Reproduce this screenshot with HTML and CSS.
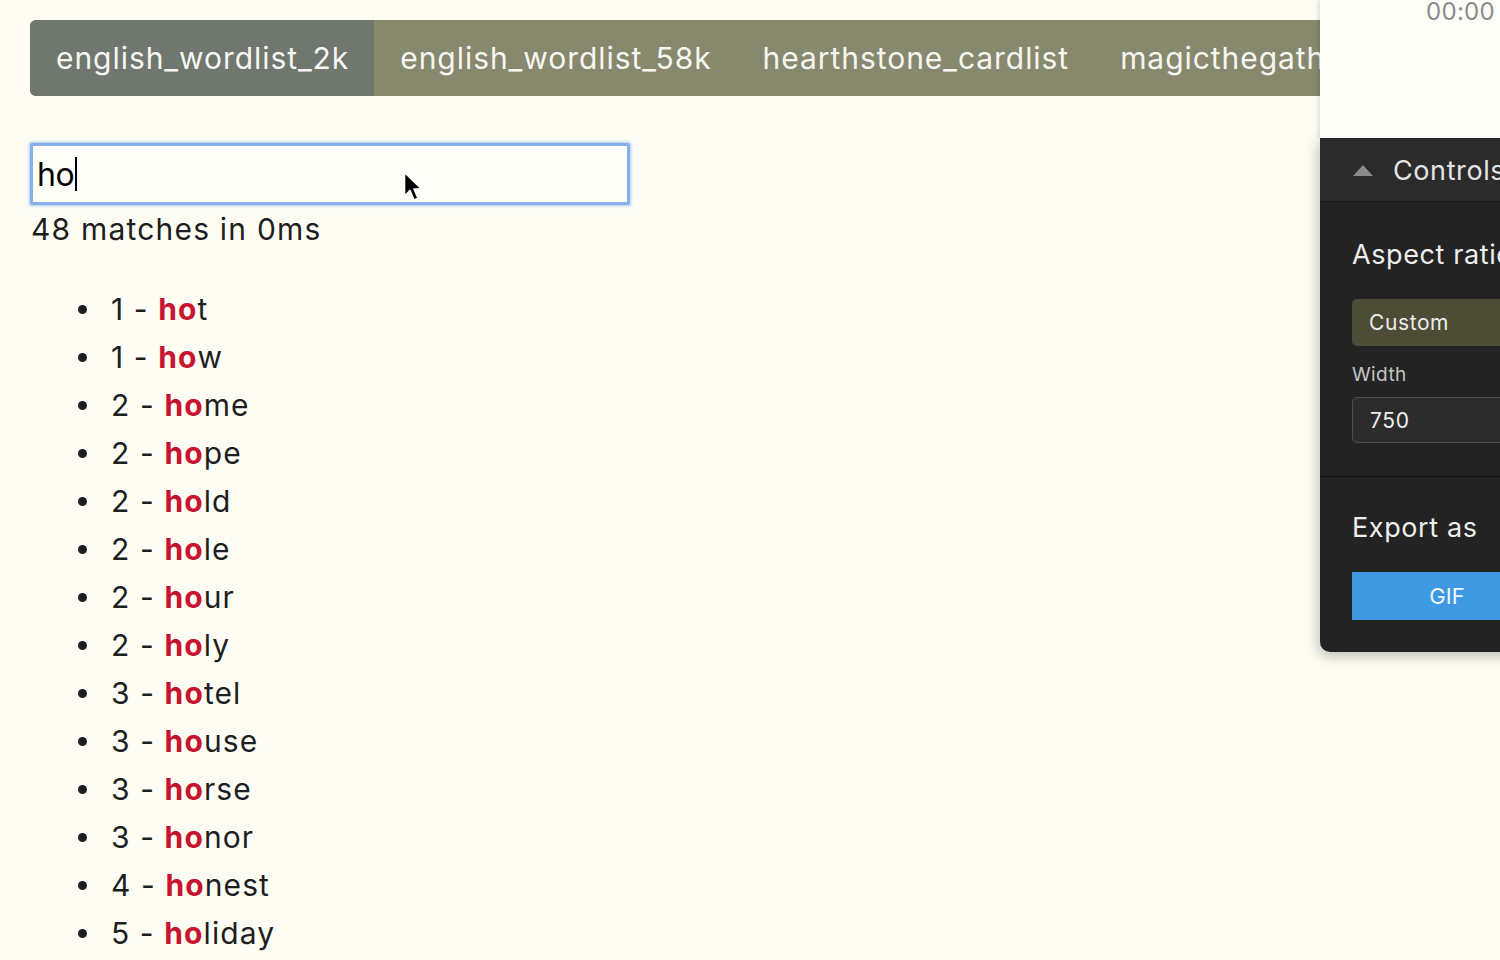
FILE: index.html
```html
<!DOCTYPE html>
<html>
<head>
<meta charset="utf-8">
<link rel="stylesheet" href="styles.css">
</head>
<body>
<main class="page">
  <nav class="tabs">
    <div class="tab active">english_wordlist_2k</div>
    <div class="tab">english_wordlist_58k</div>
    <div class="tab">hearthstone_cardlist</div>
    <div class="tab">magicthegathering_cardlist</div>
  </nav>
  <div class="search">
    <div class="search-input">ho<span class="caret"></span></div>
    <svg class="pointer" width="22" height="34" viewBox="0 0 22 34"><path d="M1.5 1.5 L1.5 25 L7 19.5 L11 29 L15 27.3 L11 18 L18.5 18 Z" fill="#000" stroke="#fff" stroke-width="1.6" stroke-linejoin="round"/></svg>
  </div>
  <div class="stats">48 matches in 0ms</div>
  <ul class="results">
    <li>1 - <b>ho</b>t</li>
    <li>1 - <b>ho</b>w</li>
    <li>2 - <b>ho</b>me</li>
    <li>2 - <b>ho</b>pe</li>
    <li>2 - <b>ho</b>ld</li>
    <li>2 - <b>ho</b>le</li>
    <li>2 - <b>ho</b>ur</li>
    <li>2 - <b>ho</b>ly</li>
    <li>3 - <b>ho</b>tel</li>
    <li>3 - <b>ho</b>use</li>
    <li>3 - <b>ho</b>rse</li>
    <li>3 - <b>ho</b>nor</li>
    <li>4 - <b>ho</b>nest</li>
    <li>5 - <b>ho</b>liday</li>
  </ul>
</main>
<aside class="panel">
  <div class="panel-top"><span class="timer">00:00</span></div>
  <div class="panel-dark">
    <div class="panel-head"><span class="tri"></span><span>Controls</span></div>
    <div class="panel-body">
      <div class="section">
        <div class="section-title">Aspect ratio</div>
        <div class="select">Custom</div>
        <div class="label">Width</div>
        <div class="field">750</div>
      </div>
      <div class="section export">
        <div class="section-title">Export as</div>
        <div class="button">GIF</div>
      </div>
    </div>
  </div>
</aside>
</body>
</html>
```
FILE: styles.css
```css
html, body {
  margin: 0;
  height: 100%;
  overflow: hidden;
}
body {
  background: #fdfdf3;
  font-family: Inter, "Noto Sans", sans-serif;
  color: #1e1e22;
}
.page {
  padding: 20px 0 0 30px;
}
.tabs {
  display: flex;
  height: 76px;
  background: #88886e;
  border-radius: 6px 0 0 6px;
  width: 1400px;
  overflow: hidden;
}
.tab {
  display: flex;
  align-items: center;
  padding: 0 25px 0 26px;
  color: #f6f6f2;
  font-size: 30px;
  letter-spacing: 0.95px;
  white-space: nowrap;
}
.tab.active {
  background: #6f776e;
}
.search {
  position: relative;
  margin-top: 47px;
  width: 600px;
}
.search-input {
  box-sizing: border-box;
  height: 62px;
  border: 3px solid #86aeea;
  box-shadow: 0 0 3px 1px #a9c8f2;
  background: #fffffa;
  border-radius: 2px;
  font-size: 32px;
  padding-left: 4px;
  display: flex;
  align-items: center;
  color: #000;
  letter-spacing: -0.5px;
}
.caret {
  display: inline-block;
  width: 2px;
  height: 34px;
  background: #000;
  margin-left: 1px;
}
.pointer {
  position: absolute;
  left: 373px;
  top: 28px;
}
.stats {
  font-size: 30px;
  line-height: 40px;
  margin-top: 4px;
  padding-left: 1px;
  letter-spacing: 1.2px;
}
.results {
  margin: 36px 0 0 0;
  padding-left: 81px;
  list-style: none;
  font-size: 30px;
  line-height: 48px;
  letter-spacing: 1.1px;
}
.results li::before {
  content: "";
  display: inline-block;
  width: 9px;
  height: 9px;
  border-radius: 50%;
  background: #1e1e22;
  margin-left: -33px;
  margin-right: 24px;
  vertical-align: middle;
  position: relative;
  top: -2px;
}
.results b {
  color: #c8142f;
  font-weight: 700;
}
.panel {
  position: absolute;
  top: 0;
  left: 1320px;
  width: 254px;
  font-family: Inter, "Noto Sans", sans-serif;
}
.panel-top {
  height: 138px;
  background: #fefef8;
  box-shadow: -2px 0 4px rgba(0,0,0,0.12);
  position: relative;
}
.timer {
  position: absolute;
  top: -3px;
  left: 106px;
  font-size: 24px;
  color: #8c8c8c;
  letter-spacing: 0.3px;
}
.panel-dark {
  background: #232323;
  border-radius: 0 0 0 10px;
  box-shadow: -2px 4px 14px rgba(0,0,0,0.25);
  padding-bottom: 32px;
}
.panel-head {
  height: 64px;
  background: #2b2b2b;
  border-bottom: 1px solid #181818;
  display: flex;
  align-items: center;
  padding-left: 33px;
  gap: 20px;
  color: #e4e4e4;
  font-size: 27px;
  letter-spacing: 0.6px;
  padding-top: 2px;
  box-sizing: border-box;
}
.tri {
  width: 0;
  height: 0;
  border-left: 10px solid transparent;
  border-right: 10px solid transparent;
  border-bottom: 11px solid #8a8a8a;
}
.panel-body {
  padding: 0 32px;
}
.section {
  padding-top: 35px;
}
.section-title {
  font-size: 27px;
  color: #eeeeee;
  line-height: 36px;
  letter-spacing: 0.6px;
  white-space: nowrap;
}
.select {
  margin-top: 26px;
  height: 47px;
  box-sizing: border-box;
  background: #4c4c37;
  border-radius: 5px;
  font-size: 21px;
  color: #ececec;
  display: flex;
  align-items: center;
  padding-left: 17px;
  letter-spacing: 0.6px;
}
.label {
  margin-top: 17px;
  font-size: 19px;
  color: #c4c4c4;
  line-height: 24px;
  letter-spacing: 0.4px;
}
.field {
  margin-top: 10px;
  height: 46px;
  box-sizing: border-box;
  background: #2c2c2c;
  border: 1px solid #4e4e4e;
  border-radius: 5px;
  font-size: 21px;
  color: #eeeeee;
  display: flex;
  align-items: center;
  padding-left: 17px;
  letter-spacing: 0.6px;
}
.export {
  margin-top: 33px;
  border-top: 1px solid #111;
  margin-left: -32px;
  margin-right: -32px;
  padding-left: 32px;
  padding-right: 32px;
  padding-top: 33px;
}
.button {
  margin-top: 26px;
  height: 48px;
  background: #3f99e2;
  color: #eef6ff;
  font-size: 22px;
  display: flex;
  align-items: center;
  justify-content: center;
}
```
